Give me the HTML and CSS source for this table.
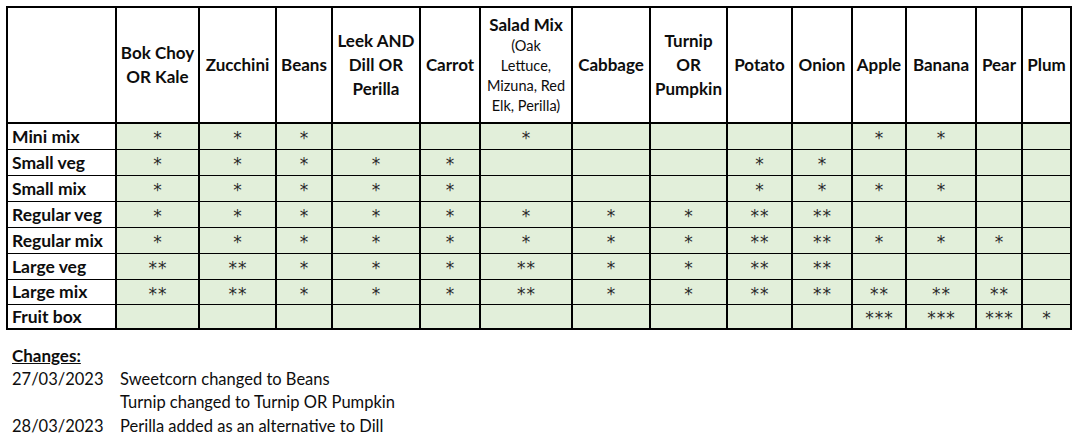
FILE: index.html
```html
<!DOCTYPE html>
<html>
<head>
<meta charset="utf-8">
<link rel="stylesheet" href="styles.css">
</head>
<body>
<table class="grid">
  <colgroup>
    <col class="c1"><col class="c2"><col class="c3"><col class="c4"><col class="c5"><col class="c6"><col class="c7"><col class="c8"><col class="c9"><col class="c10"><col class="c11"><col class="c12"><col class="c13"><col class="c14"><col class="c15">
  </colgroup>
  <thead>
    <tr class="head">
      <th class="corner"></th>
      <th>Bok Choy<br>OR Kale</th>
      <th>Zucchini</th>
      <th>Beans</th>
      <th>Leek AND<br>Dill OR<br>Perilla</th>
      <th>Carrot</th>
      <th><span class="title">Salad Mix</span><span class="sub">(Oak<br>Lettuce,<br>Mizuna, Red<br>Elk, Perilla)</span></th>
      <th>Cabbage</th>
      <th>Turnip<br>OR<br>Pumpkin</th>
      <th>Potato</th>
      <th>Onion</th>
      <th>Apple</th>
      <th>Banana</th>
      <th>Pear</th>
      <th>Plum</th>
    </tr>
  </thead>
  <tbody>
    <tr><th class="label">Mini mix</th><td>*</td><td>*</td><td>*</td><td></td><td></td><td>*</td><td></td><td></td><td></td><td></td><td>*</td><td>*</td><td></td><td></td></tr>
    <tr><th class="label">Small veg</th><td>*</td><td>*</td><td>*</td><td>*</td><td>*</td><td></td><td></td><td></td><td>*</td><td>*</td><td></td><td></td><td></td><td></td></tr>
    <tr><th class="label">Small mix</th><td>*</td><td>*</td><td>*</td><td>*</td><td>*</td><td></td><td></td><td></td><td>*</td><td>*</td><td>*</td><td>*</td><td></td><td></td></tr>
    <tr><th class="label">Regular veg</th><td>*</td><td>*</td><td>*</td><td>*</td><td>*</td><td>*</td><td>*</td><td>*</td><td>**</td><td>**</td><td></td><td></td><td></td><td></td></tr>
    <tr><th class="label">Regular mix</th><td>*</td><td>*</td><td>*</td><td>*</td><td>*</td><td>*</td><td>*</td><td>*</td><td>**</td><td>**</td><td>*</td><td>*</td><td>*</td><td></td></tr>
    <tr><th class="label">Large veg</th><td>**</td><td>**</td><td>*</td><td>*</td><td>*</td><td>**</td><td>*</td><td>*</td><td>**</td><td>**</td><td></td><td></td><td></td><td></td></tr>
    <tr class="short"><th class="label">Large mix</th><td>**</td><td>**</td><td>*</td><td>*</td><td>*</td><td>**</td><td>*</td><td>*</td><td>**</td><td>**</td><td>**</td><td>**</td><td>**</td><td></td></tr>
    <tr class="short last"><th class="label">Fruit box</th><td></td><td></td><td></td><td></td><td></td><td></td><td></td><td></td><td></td><td></td><td>***</td><td>***</td><td>***</td><td>*</td></tr>
  </tbody>
</table>

<section class="changes">
  <div class="changes-title">Changes:</div>
  <div class="log">
    <span class="date">27/03/2023</span><span>Sweetcorn changed to Beans</span>
    <span class="date"></span><span>Turnip changed to Turnip OR Pumpkin</span>
    <span class="date">28/03/2023</span><span>Perilla added as an alternative to Dill</span>
  </div>
</section>
</body>
</html>
```

FILE: styles.css
```css
html, body {
  margin: 0;
  padding: 0;
  background: #ffffff;
}

body {
  font-family: Lato, "Open Sans", sans-serif;
  color: #0d0d0d;
  padding: 6px 0 0 6px;
}

.grid {
  border-collapse: collapse;
  table-layout: fixed;
  width: 1066px;
  border: 2px solid #000;
}

.c1 { width: 109px; }
.c2 { width: 83px; }
.c3 { width: 77px; }
.c4 { width: 56px; }
.c5 { width: 88px; }
.c6 { width: 60px; }
.c7 { width: 92px; }
.c8 { width: 78px; }
.c9 { width: 77px; }
.c10 { width: 65px; }
.c11 { width: 60px; }
.c12 { width: 54px; }
.c13 { width: 70px; }
.c14 { width: 46px; }
.c15 { width: 49px; }

.grid th,
.grid td {
  padding: 0 1px;
  text-align: center;
  vertical-align: middle;
  overflow: hidden;
  white-space: nowrap;
}

.head th {
  height: 114px;
  border: 2px solid #000;
  font-weight: 700;
  font-size: 17px;
  line-height: 24px;
  background: #ffffff;
}

.head .title {
  display: block;
  line-height: 22px;
}

.head .sub {
  display: block;
  font-weight: 400;
  font-size: 14.5px;
  line-height: 20px;
}

tbody tr {
  height: 26px;
}

tbody tr.short {
  height: 25px;
}

.grid .label {
  text-align: left;
  padding-left: 4px;
  font-weight: 700;
  font-size: 17.5px;
  background: #ffffff;
  border-right: 2px solid #000;
  border-top: 1px solid #000;
  border-bottom: 1px solid #000;
}

tbody td {
  background: #e2efda;
  border-top: 1px solid #000;
  border-bottom: 1px solid #000;
  border-left: 2px solid #000;
  border-right: 2px solid #000;
  font-family: "DejaVu Sans", sans-serif;
  font-size: 17px;
  line-height: 16px;
  letter-spacing: 1px;
  color: #2a2a2a;
}

tbody td:not(:empty) {
  padding-top: 4px;
  padding-left: 2px;
}

tbody tr.last td,
tbody tr.last th {
  border-bottom: 2px solid #000;
}

.changes {
  margin-top: 14px;
  padding-left: 6px;
  font-size: 16.5px;
  line-height: 23.5px;
}

.changes-title {
  font-weight: 700;
  font-size: 17px;
  text-decoration: underline;
}

.log {
  display: grid;
  grid-template-columns: 108px auto;
}
```
